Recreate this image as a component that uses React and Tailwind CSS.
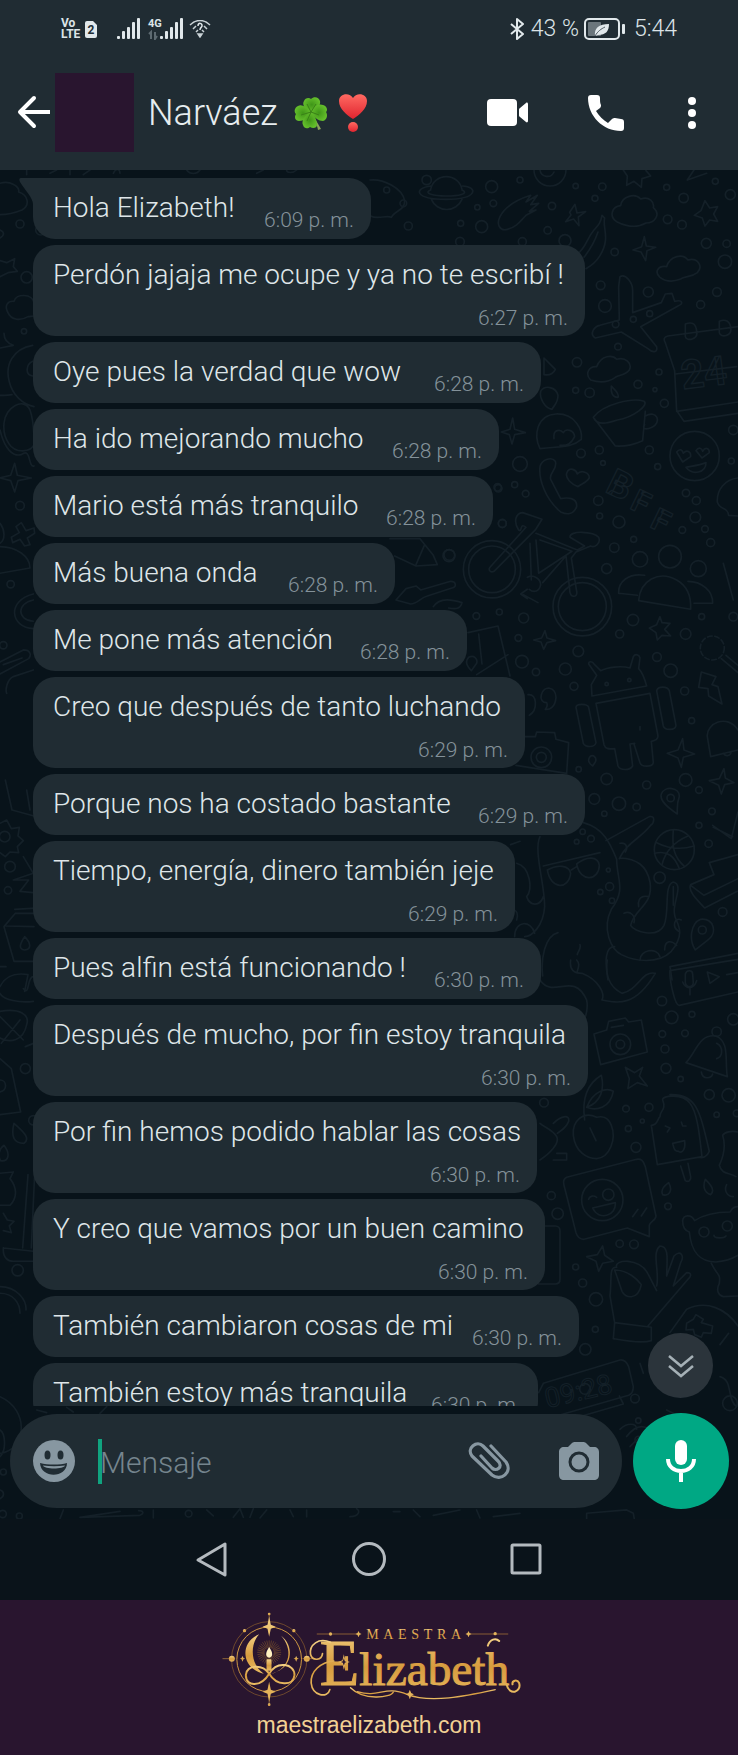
import React from "react"

const messages = [
  { text: "Hola Elizabeth!", time: "6:09 p. m.", width: "w-[338px]", first: true },
  { text: "Perdón jajaja me ocupe y ya no te escribí !", time: "6:27 p. m.", width: "w-[552px]", stacked: true },
  { text: "Oye pues la verdad que wow", time: "6:28 p. m.", width: "w-[508px]" },
  { text: "Ha ido mejorando mucho", time: "6:28 p. m.", width: "w-[466px]" },
  { text: "Mario está más tranquilo", time: "6:28 p. m.", width: "w-[460px]" },
  { text: "Más buena onda", time: "6:28 p. m.", width: "w-[362px]" },
  { text: "Me pone más atención", time: "6:28 p. m.", width: "w-[434px]" },
  { text: "Creo que después de tanto luchando", time: "6:29 p. m.", width: "w-[492px]", stacked: true },
  { text: "Porque nos ha costado bastante", time: "6:29 p. m.", width: "w-[552px]" },
  { text: "Tiempo, energía, dinero también jeje", time: "6:29 p. m.", width: "w-[482px]", stacked: true },
  { text: "Pues alfin está funcionando !", time: "6:30 p. m.", width: "w-[508px]" },
  { text: "Después de mucho, por fin estoy tranquila", time: "6:30 p. m.", width: "w-[555px]", stacked: true },
  { text: "Por fin hemos podido hablar las cosas", time: "6:30 p. m.", width: "w-[504px]", stacked: true },
  { text: "Y creo que vamos por un buen camino", time: "6:30 p. m.", width: "w-[512px]", stacked: true },
  { text: "También cambiaron cosas de mi", time: "6:30 p. m.", width: "w-[546px]" },
  { text: "También estoy más tranquila", time: "6:30 p. m.", width: "w-[505px]" },
]

// [cx, cy, r] dots scattered between the doodles, one list per wallpaper tile
const dotsTop = [
  [155, 50, 18], [240, 30, 9], [407, 48, 8], [487, 50, 11], [465, 85, 9], [112, 112, 8], [160, 100, 10], [336, 108, 11],
  [125, 170, 18], [62, 160, 9], [323, 181, 11], [731, 84, 14], [683, 148, 13], [726, 164, 13], [799, 220, 15], [860, 221, 11],
  [871, 74, 15], [826, 34, 9], [680, 52, 9], [524, 246, 11], [855, 275, 20], [482, 346, 13], [625, 366, 15], [831, 366, 13],
  [782, 404, 12], [495, 408, 19], [534, 530, 10], [629, 431, 9], [580, 448, 9], [527, 463, 10], [411, 577, 14], [407, 661, 9],
  [449, 668, 14], [657, 606, 9], [594, 643, 12], [645, 659, 6], [673, 700, 12], [423, 850, 13], [478, 840, 12], [628, 840, 12],
  [489, 879, 7], [653, 890, 9], [240, 882, 22], [173, 952, 11], [224, 944, 9], [257, 971, 10], [475, 992, 14], [479, 1038, 9],
  [537, 1056, 18], [738, 969, 11], [769, 992, 12], [766, 1042, 16], [727, 1080, 10], [795, 1077, 10], [812, 1118, 12],
  [581, 1108, 9], [523, 1133, 14], [187, 1060, 12], [28, 1155, 16], [880, 780, 14], [874, 873, 9], [375, 212, 18], [247, 215, 12],
  [60, 215, 13], [-110, 100, 10], [-95, 168, 12], [-40, 30, 14], [-160, 60, 9],
]
const dotsMiddle = [
  [500, 26, 15], [775, 26, 24], [109, 168, 10], [178, 156, 9], [251, 174, 15], [579, 180, 17], [539, 222, 12], [737, 222, 16],
  [785, 170, 9], [880, 170, 13], [235, 234, 10], [415, 274, 16], [246, 305, 19], [376, 327, 18], [288, 336, 11], [402, 379, 12],
  [651, 291, 13], [692, 332, 20], [734, 393, 12], [755, 482, 9], [416, 628, 8], [500, 657, 17], [620, 675, 12], [737, 660, 19],
  [777, 690, 10], [463, 717, 16], [537, 731, 20], [590, 741, 11], [493, 761, 8], [816, 754, 10], [777, 796, 9], [806, 851, 11],
  [659, 953, 17], [848, 1056, 13], [428, 815, 8], [453, 836, 10], [410, 845, 7], [505, 930, 6], [509, 980, 12], [481, 996, 8],
  [516, 1022, 8], [500, 372, 5], [568, 360, 5],
]
const dotsBottom = [
  [666, 123, 14], [695, 172, 19], [756, 163, 9], [667, 222, 10], [735, 220, 10], [675, 267, 12], [678, 325, 15], [722, 357, 8],
  [808, 404, 15], [866, 406, 20], [830, 464, 8], [890, 460, 10], [558, 446, 10], [627, 442, 12], [607, 483, 6], [565, 506, 9],
  [588, 562, 15], [684, 739, 10], [334, 707, 12], [353, 761, 17], [539, 851, 11], [582, 853, 13], [407, 921, 9], [428, 969, 12],
  [468, 1018, 20], [466, 1108, 9], [436, 1168, 17], [312, 428, 13], [880, 178, 17], [435, 1287, 16], [585, 1316, 13],
  [595, 1382, 8], [595, 1439, 10], [645, 1434, 11], [640, 1483, 9], [870, 1330, 22], [855, 1498, 11], [560, 1740, 9],
]

function Dots({ items }) {
  return items.map(([cx, cy, r]) => <circle key={`${cx}-${cy}`} cx={cx} cy={cy} r={r} />)
}

function Wallpaper() {
  return (
    <svg
      aria-hidden="true"
      viewBox="0 170 738 1349"
      preserveAspectRatio="xMidYMin slice"
      className="absolute inset-0 w-full h-full"
      fill="none"
      stroke="#142028"
      strokeWidth="5"
      strokeLinecap="round"
      strokeLinejoin="round"
      fontFamily="Roboto, sans-serif"
    >
      <g transform="translate(440 170) scale(.3333)">
        <Dots items={dotsTop} />
        {/* planet and moon */}
        <path d="M-28 58a48 48 0 0 1 94 0M-26 88a50 50 0 0 0 92 0M-28 48c-50 6-52 40 46 40s96-38 50-40M-28 60c-24 10 10 18 46 18s72-6 48-18" />
        <path d="M282 0a48 48 0 1 0 96 0M300 0a22 22 0 0 0 42 6M550 0l12 18-2 28 22-12 22 18 2-26 26-8-14-16M742 30l20-30M742 30l58-20" />
        {/* pizza, hand */}
        <path d="M-210 30c40-4 96 24 104 62 2 28-30 30-40 50-16-8-40 8-62-4" />
        <path d="M180 140c-12 24 0 44 22 38 30-8 38-24 56-42l30-16-20 4 28-24-24 4 20-28-34 20 14-20c-50 16-78 36-92 64Z" />
        {/* clouds and stars */}
        <path d="M530 155c-24-16-14-46 12-48 4-30 44-38 60-20 26-10 42 10 38 26 24 20 4 46-22 46-28 16-60 10-88-4ZM660 322c-18-16-6-36 20-32 10-34 50-40 64-20 30-8 46 20 28 38-20 16-36 8-52 20-22 8-44 6-60-6ZM452 630c-18-18-6-42 18-40 14-36 48-36 60-22 26-8 48 12 38 32-12 16-28 14-42 22-22 16-50 16-74 8Z" />
        <path d="m405 103 6 26 26-4-22 16 2 26-16-20-24 8 16-20-4-8ZM795 92l14 22 24-4-12 22 12 22-24-4-14 18-8-24-24-8 20-14ZM613 200l6 28 28 4-26 10-4 30-14-26-24-6 26-10ZM218 744l6 34 32 10-32 6-8 28-8-28-24-8 26-8Z" />
        {/* banana */}
        <path d="M486 136c-4 24-12 30-24 44-24 28-22 50-48 70M486 136l8 8c-8 30 20 60-16 116-10 16-22 26-40 36M474 186c-10 30-22 50-42 76" />
        {/* plane */}
        <path d="M540 320c18-10 38 20 38 40v68l86-30 12-26 20-2 8 24c26-6 26 8 10 14l-112 62 48 60c4 20-14 18-26 6l-80-50-78 18c-20-12-2-36 14-38l58-16-2-100Z" />
        {/* calendar */}
        <path d="m894 470-210 28c-12 2-14 10-8 20l28 84 6 120 22 32 162-24M706 612l184-22M710 724l184-28M736 462c22-8 32 0 34 22 6 24-30 32-34 16ZM838 454c18-8 32 0 34 18 6 26-30 34-34 16Z" />
        <text x="728" y="658" fontSize="120" fontWeight="700" strokeWidth="4" transform="rotate(-7 728 658)">24</text>
        {/* drops, cup, bread */}
        <path d="M312 564l34 34c-8 18-22 18-34 16ZM302 664c12-20 46-14 52 12 0 24-12 30-18 42-22-4-38-34-34-54ZM514 648c6 8 26 22 20 34-18 0-22-16-20-34ZM460 742c30-40 120-60 152-48 16 10-30 48-80 56-30 10-60 18-72-8ZM460 742l66 86c30 2 60-6 82-16l8-88M616 738c36-20 50 20 20 34-22 10-30 2-22-8M300 836c-20-40-10-100 48-104 60-2 80 50 76 76-32 28-64 20-124 28ZM342 806c-4-30 20-28 28-18 8-14 32-8 34 12-10 20-20 28-44 26" />
        <circle cx="764" cy="858" r="74" />
        <path d="M710 846c10-12 18-6 20 4 10-12 24-6 22 10l-24 16ZM768 842c8-12 18-8 20 2 8-14 20-10 20 4l-22 16ZM738 892c20-4 40-6 60-14 0 30-40 40-60 14Z" />
        {/* phone, heart, initials */}
        <path d="M300 890c6-24 36-30 46-16 8 24-20 34-14 54l30 58c20-4 50-4 48 24-10 26-30 24-48 16-48-40-66-100-62-136ZM380 910c8-24 30-8 32 2 12-14 36-4 36 12-8 14-26 18-34 26-20-8-38-24-34-40Z" />
        <text x="492" y="964" fontSize="112" fontWeight="700" strokeWidth="4" transform="rotate(26 492 964)">B</text>
        <text x="566" y="1014" fontSize="92" fontWeight="700" strokeWidth="4" transform="rotate(26 566 1014)">F</text>
        <text x="626" y="1070" fontSize="92" fontWeight="700" strokeWidth="4" transform="rotate(26 626 1070)">F</text>
        <path d="M894 924c-40 4-64 36-62 72 10 28 30 12 34 40l28 2" />
        {/* bicycle */}
        <circle cx="156" cy="1198" r="86" />
        <circle cx="156" cy="1198" r="70" />
        <circle cx="427" cy="1310" r="88" />
        <circle cx="427" cy="1310" r="72" />
        <path d="m150 1192 108-120c-20-16-10 16-22 8-16-24-10-50 12-52l58 20-20 32-124 124c-10 6-18-4-12-12ZM288 1090l124 50 22-12-44-26c-2-22 70-18 86 0 8 20-14 32-24 26l-44 18-14 18 16 100c4 18-16 20-20 4l-12-110-70 80M270 1120l4 110M288 1110l8 100 100-66-96-34" />
        <path d="M262 1222c20-10 40 6 40 22-4 20-20 26-34 14M250 1274l44 24M262 1258l-20 14 20 14" />
        <circle cx="600" cy="1168" r="23" />
        <circle cx="690" cy="1160" r="34" />
        <path d="M536 1270c-2-34 30-62 78-54M536 1270l56 6M596 1292c4-60 60-92 114-62 32 18 44 52 42 88ZM744 1234c40 0 76 28 74 66h-56M850 1180l30 110" />
      </g>
      <g transform="translate(440 560) scale(.3333)">
        <Dots items={dotsMiddle} />
        <path d="m660 170 6 18 24 2-16 18 18 20-26-2-14 14-4-22-20-14 22-10ZM315 212l6 22 26 8-26 6-10 20-8-22-22-6 24-6Z" />
        {/* map */}
        <path d="m84 218 90-20 36 150M110 344l94-60M116 222l10 90M94 332c-12-12-20-28-8-40 16-8 28 4 24 18Z" />
        {/* robot */}
        <path d="m456 408-2-34 16-28-24-34c0-10 12-8 16 0l20 20c20-10 60-16 88-8l10-34c6-10 18-6 20 4l-4 32c12 12 18 30 24 52ZM468 430l162-30 24 128c0 10-8 14-20 16l6 64c-2 14-36 14-40 0l-18-56 2-2-14 2 8 66c-8 14-38 14-44 0l-10-52c-20 2-28 0-32-12ZM408 442c0-12 34-12 38 0l22 106c-4 16-32 14-38 2ZM650 392c4-14 32-14 38 0l20 104c-2 16-34 16-38 2Z" />
        {/* guitar, bolt, bell */}
        <circle cx="817" cy="264" r="36" strokeDasharray="14 8" />
        <path d="m844 296 50 42M858 286l36 30M784 336l-8 46 28 4 2 22 40 24-12-52-18-6 12-24ZM802 530c-4-40 60-70 92-20M802 530l10 60 82-20M850 580c8 12 22 8 24-6" />
        <path d="m728 536 4 34 32 12-34 10-6 30-10-28-32-14 32-10ZM852 626l4 28 26 14-28 6-10 28-8-26-28-14 30-6Z" />
        {/* camera and quotes */}
        <path d="M228 616 380 640l6-92-38-10-4-20-54-2-4 14h-40" />
        <circle cx="304" cy="592" r="31" />
        <circle cx="304" cy="592" r="15" />
        <path d="M304 404c8-28 42-26 44 8-2 30-20 38-32 36 8-10 6-16 4-20-12 0-20-10-16-24ZM264 404c28-4 30 46 4 62" />
        <path d="M712 762c-30-20-54-40-48-60 10-26 56-20 54 8-8 20-6 30-6 52ZM450 590c10-8 22 4 16 16l-8 12c-12-8-16-18-8-28Z" />
        <circle cx="692" cy="714" r="11" />
        {/* octopus wearing glasses */}
        <path d="M430 788c60 16 80 60 100 110 0 60 30 90-16 150-30 60 0 120 30 136 40 20 110 30 150-10 50-60 10-90 10-110-10-30 30-90-4-98-30 10-10 90-28 130-20 40-90 20-100 0 10-50 70-60 58-130-10-50-40-70-90-72M498 842l130-72c20-4 14 20 4 26-30 40-70 50-94 100M300 830c-20 40 14 140 14 210-4 60-40 90-60 90M230 910c40 10 50 80 30 100 10 30 40 30 50 0M220 1050c10 0 16 14 10 30M224 1130c0-50 50-50 60-10" />
        <path d="m310 918 170-40M322 930c30-18 66-14 70 10-6 50-60 50-70-10ZM410 912c30-24 64-24 68 4 0 44-56 56-68-4ZM394 930l16-10M540 850c20-4 24 14 16 26M596 1040c-6-40 30-30 30-30M552 1060c20-10 36 10 30 28M700 980v56M724 1080c-20-10-30 20-8 34M674 1170c0-30 20-30 36-14M600 1200c0-30 50-40 60-10" />
        {/* basketball, sneaker */}
        <circle cx="703" cy="869" r="60" />
        <path d="M650 848c40 20 80 20 112 10M700 810c-4 50 0 80 34 110M666 914c10-40 40-70 78-86M644 880c40-10 60 10 74 46" />
        <path d="m818 796 56 40 20-80M820 802l58 28M808 908l86-24M808 908l14 36-70 30c-10 20 24 50 42 70l98-50M752 976l40 30 102-50M766 1170c-20-30-14-80 16-92 40-4 50 40 24 60Z" />
        <circle cx="787" cy="1110" r="12" />
        <path d="M600 500v10M354 1118c-40 10-52 80-46 130M420 1154c4 16-8 20-8 30M504 1260c-10-60-8-100 20-100M690 1220l204-40M690 1220l6 40M240 844l-28 10" />
      </g>
      <g transform="translate(440 960) scale(.3333)">
        <Dots items={dotsBottom} />
        <path d="M392 0c-4 30 10 40 34 40 50 20 70 60 60 80 50 10 100 20 160-80-40-10-50 50-100 60-40-20-50-60-44-100M300 60c40 60 100-30 140 60 4 20 0 50-10 60M410 0c10 10 6 20 2 34" />
        <path d="M894 96 718 136c-14 2-30-80-28-104l204-34M736 42c4-14 22-12 22 0l2 26c-2 16-20 16-24 0ZM728 66c10 24 34 22 42-4M750 86v18M802 36l36 14-28 20ZM860 44l34-6" />
        {/* camera, bell */}
        <path d="m462 222 38-12 6-26 50-10 10 12 38-6 18 96-140 38ZM514 202l36-6" />
        <circle cx="541" cy="253" r="31" />
        <circle cx="541" cy="253" r="13" />
        <circle cx="830" cy="215" r="14" />
        <path d="m738 308 124 42c-8-50 8-104-34-122-50-8-60 50-90 80ZM784 336c4 24 30 20 34 6M830 250c20 10 20 40 0 46" />
        <path d="m556 322 28 16 24-16-10 26 24 30-30-10-28 18 4-30Z" />
        {/* cherry */}
        <path d="M470 472c-40-20-74 10-70 54 6 50 40 70 70 70 40-4 60-60 44-100-10-26-30-28-44-24ZM434 480c-10-70 10-110 50-134 10 40 0 80-44 96M440 442c20-50 60-60 80-48-10 50-50 60-80 48M450 504l18 38" />
        {/* ice lolly */}
        <path d="m652 614-18-118c20 0 18-20 26-26 0-20 20-20 8-50-4-14 60-20 82 10 24 30 30 110 36 160ZM690 404c80-4 90 50 118 170-6 16-20 22-32 18M722 618l14 44c10 6 18-2 16-12l-8-40M676 498l14 6-8 12M724 486l4 12 10 0M698 550l36-8c4 30-10 38-18 32-14 0-14-10-18-24" />
        <path d="M686 668c-14 10-24 24-18 36 18 6 32-10 18-36ZM796 658c-8 20-4 40 16 46 16-14-4-34-16-46ZM860 674c-10 20 4 36 20 36M894 516c-20-4-40 0-46 10 10 30 4 60-10 90 8 30 30 20 50 34" />
        {/* speech bubble */}
        <path d="m380 652 210-54c14-2 20 4 26 22l32 148c0 12-16 16-20 28v34l-66-26-130 34c-14 0-20-6-24-20l-36-142c-4-14 0-20 8-24Z" />
        <circle cx="487" cy="720" r="62" />
        <circle cx="505" cy="704" r="17" />
        <path d="M446 718c4-12 16-12 24-6M458 744l68-16c4 40-50 56-68 16ZM578 770l16-22M604 768l16-24M300 600c30-20 60-50 50-70-10-20-40-30-50-40M340 490c20-20 50-30 46-6-8 20-20 26-34 36M350 580h30v20h-40M316 798h30c10 0 14 8 14 14v146c0 10-6 14-14 14h-50" />
        {/* bear */}
        <path d="M894 740c-20 0-20 14-24 16-40 0-76 6-106 26-10-20-34-18-36 0 0 20 8 30 20 34 6 60 30 90 80 90 30-2 50-10 66-20M814 910c20 40 28 30 24 60-10 20-4 36 12 40l44-2" />
        <circle cx="792" cy="816" r="15" />
        <circle cx="862" cy="798" r="15" />
        <path d="M822 826c0 10 30 10 36 2" />
        {/* ok hand */}
        <path d="m524 1088-14-80c6-50-4-90 20-86-10-24 70-30 94 20l26 50M524 930c40 0 70 30 80 44-10 50-50 40-58 20ZM650 978c10-40-16-100 10-120 30 0 20 50 20 90l22-60c20-20 32 0 20 20l-22 70 40-40c20 0 10 16 4 20l-120 140M524 1088l110 14v40c-30 10-80 0-114-6Z" />
        <path d="m488 858 6 28 26 18-32 6-12 24-8-30-28-14 32-6Z" />
        {/* game pad */}
        <path d="m690 1118 50-70c60-30 120 0 154 50M740 1090l20-12 8-14 22 14-6 10 34 10-4 22-24-2-6 14-20-8-4-16-22 2ZM866 1120l-26 34" />
        {/* digital clock */}
        <path d="m310 1270 230-70c14-2 20 6 26 20l14 60c0 14-4 22-14 26l-230 66M296 1298l14-28M330 1396l220-64-12-24" />
        <text x="322" y="1344" fontSize="82" strokeWidth="3" transform="rotate(-13 322 1344)">09:28</text>
        <path d="M840 1250c40 10 20 70 50 90M540 1408c20-20 50-20 50 0M630 1400l-60 60M680 1350l60 30M600 1210l10 30" />
        <path d="M440 1720v-60l120-10 20 10 12 70M480 1740a30 30 0 1 1 36-2M650 1680l20 50c10 10 14-10 20-30M760 1720l20-30M560 1430c30-40 60-40 90 0" />
      </g>
      {/* left edge */}
      <g transform="translate(0 170) scale(.3333)">
        <path d="M0 40c30-10 60 10 56 26 30 10 34 40 10 54-20 8-50 14-66 14M0 180c14 6 14 16 0 24M0 272l20 6 24-12-4 24 12 14-28 4-24 12M22 424c-8-16 0-32 20-30 6-24 54-24 60 4 20-2 34 16 26 28-14 14-30 12-44 14-20 12-50 14-62-16ZM12 490c0 20 10 30 28 36l-40 8M98 526c-60 10-84 60-70 110 10 40 40 66 74 74M98 574c-20 10-24 40 0 44M0 676c10 0 16 2 36-2M12 760c4-50 60-80 78-40 14 40 10 80 14 100-10 30-60 30-78 0-14-20-16-40-14-60ZM0 780c14 60 40 80 64 74 30-24 20 40 38 34M44 880l8 36 42 8-40 8-10 34-12-34-32-8 32-8ZM64 1058l14 24 24-8 2 16-22 14 8 20-16 4-14-20-22 10-4-16 24-14-10-18ZM0 1060c16 20 16 50 0 60M0 1130c50 0 90 30 90 64L0 1210M100 1272c-80 20-70 100 0 104M100 1290c-50 10-50 60 0 64M0 1476l70-36c20 0 26 14 16 26l-86 46M10 1484l56-20 M100 1500l-60 20c-20 10-24 40-20 50" />
        <circle cx="60" cy="162" r="12" />
        <circle cx="122" cy="180" r="15" />
        <circle cx="80" cy="322" r="17" />
        <circle cx="72" cy="484" r="8" />
        <circle cx="60" cy="1007" r="13" />
        <circle cx="32" cy="1243" r="11" />
        <circle cx="10" cy="1426" r="11" />
        <path d="M80 14V0M150 10l20-10M210 0v14M250 14l20-14M340 10c10-20 20-10 20 0M560 0c10 14 30 14 40 0M770 10l20-10M860 0c0 10 20 10 30 0" />
      </g>
      <g transform="translate(0 780) scale(.3333)">
        <path d="M16 0l20 90 66 18M80 30l10 60M0 130l20-10 14 26 24-4-4 26 16 14-18 18 4 18-26-2-14 14-16-12M70 230l30 50-60 20h46l-26 34 40 4M44 388l100-6M46 400 12 440l30 104h100M46 400h60M18 438l84 2M74 470c-14 20-20 38 0 40 22-2 18-22 0-40ZM0 560h18M0 620c20-40 60-40 84-36l-10 50M100 590c-20 0-10 60-30 36M0 640c10 20 60 30 100 24M0 694c60-10 90 10 80 40-10 50-50 56-80 40M0 710l70 70M60 720l-56 70M76 800l60-24M0 836l34 30 28 130-62 8M0 900c20 0 24 30 0 36M42 1030c-10 40 0 60 30 60 20-14 0-34-30-60ZM12 1096c-14 10-20 30-10 46 24 4 30-20 10-46ZM0 1180l40-4-10 20c24 30 20 60 0 80H0M10 1300l12 20 20 4-14 14 6 20-24-6M84 1184l-16 220M104 1180l-10 224M10 1404l90 10 120 8M10 1404c-2 30 14 40 30 40h66M0 1520c50 0 80 40 78 70M0 1540c40 0 60 30 60 60" />
        <circle cx="14" cy="170" r="16" />
        <circle cx="30" cy="260" r="16" />
        <circle cx="24" cy="331" r="11" />
        <circle cx="76" cy="866" r="15" />
        <circle cx="100" cy="1021" r="14" />
        <circle cx="53" cy="1471" r="17" />
      </g>
      {/* strip under the composer */}
      <g transform="translate(0 1330) scale(.3333)">
        <path d="M110 240l30 8M200 232l20 14M300 250l20-20M0 300c16 10 20 60 0 80M0 370c80-10 90-130 0-170M0 480c14 4 14 20 0 26M190 540l-10 26M240 562l180-6c14-6 10-14-4-14M240 562l120-18M460 540v24M620 540l20 18M700 562l20-26 10 26M750 562l10-26M800 540l-20 24M870 540l10 20M920 540v20M1050 560c30 0 30-20 20-24M1180 545h20M1240 540l20 20M1300 556l80-16M1430 540l10 24M1480 560l80-10" />
        <circle cx="8" cy="552" r="11" />
        <circle cx="58" cy="558" r="9" />
        <circle cx="566" cy="551" r="10" />
        <circle cx="10" cy="426" r="9" />
      </g>
      {/* pencil and brush behind the middle bubbles */}
      <g transform="translate(370 470) scale(.3333)">
        <path d="m60 206 90 0 40 50 12 28-64 4-64-30M164 224l-26 60M78 390l30-34 30-8 14 12 90-26c18 0 18 18 4 20l-74 24c-20 4-30 24-50 24ZM190 410c20-30 60-20 86-12-4 20-20 20-40 16" />
        <circle cx="237" cy="257" r="18" />
        <circle cx="397" cy="161" r="12" />
        <circle cx="385" cy="55" r="11" />
      </g>
    </svg>
  )
}

function SignalBars() {
  return (
    <svg viewBox="0 0 23 22" className="w-[23px] h-[22px]" fill="#e1e8eb" aria-hidden="true">
      <rect x="0" y="18" width="3" height="3" rx="1" />
      <rect x="5" y="13" width="3" height="8" rx="1" />
      <rect x="10" y="9" width="3" height="12" rx="1" />
      <rect x="15" y="4" width="3" height="17" rx="1" />
      <rect x="20" y="0" width="3" height="21" rx="1" />
    </svg>
  )
}

function StatusBar() {
  return (
    <div className="flex items-center justify-between h-14 pt-[2px] px-[61px] text-[#dce4e8]">
      <div className="flex items-center">
        <div className="w-5 text-xs leading-[11px] font-bold">
          <div>Vo</div>
          <div>LTE</div>
        </div>
        <svg viewBox="0 0 12 17" className="ml-1 w-3 h-[17px]" aria-hidden="true">
          <path d="M2 0h6l4 4v11a2 2 0 0 1-2 2H2a2 2 0 0 1-2-2V2a2 2 0 0 1 2-2Z" fill="#e1e8eb" />
          <text x="6" y="13" fontSize="12" fontWeight="700" textAnchor="middle" fill="#202c33">2</text>
        </svg>
        <div className="ml-5">
          <SignalBars />
        </div>
        <div className="flex ml-2 items-end">
          <div className="w-3 text-[11px] leading-3 font-bold">
            <div>4G</div>
            <svg viewBox="0 0 12 10" className="w-3 h-[10px]" stroke="#5d6a71" strokeWidth="2" fill="none" aria-hidden="true">
              <path d="M1 4l2-2v7M7 2v7l2-3" />
            </svg>
          </div>
          <SignalBars />
        </div>
        <svg viewBox="0 0 22 18" className="ml-[6px] w-[22px] h-[18px]" fill="none" stroke="#c9d2d6" strokeWidth="1.5" aria-hidden="true">
          <path d="M1 5C7-1 15-1 21 5M4 9l3-3M18 9l-3-3M7 12l2-2M15 12l-2-2" />
          <path d="M9 6c0-4 4.500-3 4 0-.3 1.500-2 1.500-2 4" stroke="#e1e8eb" />
          <path d="M9 14h4l-2 3Z" fill="#e1e8eb" />
        </svg>
      </div>
      <div className="flex items-center text-[23px] leading-7 font-light">
        <svg viewBox="0 0 14 22" className="w-[14px] h-[22px]" fill="none" stroke="#e1e8eb" strokeWidth="2" strokeLinejoin="round" aria-hidden="true">
          <path d="m1 6 12 10-6 5V1l6 5L1 16" />
        </svg>
        <span className="ml-[7px]">43 %</span>
        <svg viewBox="0 0 42 22" className="ml-[5px] w-[42px] h-[22px]" aria-hidden="true">
          <rect x="1" y="1" width="34" height="20" rx="4" fill="none" stroke="#e1e8eb" strokeWidth="2" />
          <rect x="4" y="4" width="13" height="14" rx="1" fill="#6b767c" />
          <path d="M11 18c-1-8 4-12 14-12 0 7-3 11-11 11" fill="#e1e8eb" />
          <path d="M11 18c3-5 6-7 10-9" stroke="#4a565d" fill="none" />
          <rect x="38" y="6" width="3" height="10" rx="1" fill="#e1e8eb" />
        </svg>
        <span className="ml-2">5:44</span>
      </div>
    </div>
  )
}

function Clover() {
  return (
    <svg viewBox="0 0 34 36" className="w-[34px] h-9" role="img" aria-label="trébol">
      <defs>
        <radialGradient id="leaf">
          <stop offset="0" stopColor="#3f9618" />
          <stop offset="1" stopColor="#63bd2b" />
        </radialGradient>
      </defs>
      <path d="M17 17c3 6 7 11 10 17l-3 1c-1-7-5-12-8-17Z" fill="#8aa35a" />
      <g fill="url(#leaf)">
        <path d="M17 17C10 14 8 9 10 6c1-3 5-4 7-2 3-3 8-2 9 2 1 4-3 9-9 11Z" />
        <path d="M17 17c3-6 8-9 12-7 4 1 5 5 3 7 2 3 1 8-3 9-4 0-9-3-12-9Z" />
        <path d="M17 17c-5-6-10-8-13-6-4 2-4 6-2 8-2 3-1 7 3 7 5 0 9-3 12-9Z" />
        <path d="M17 17c-6 4-10 9-8 13 1 4 5 4 7 2 3 2 7 1 7-2 0-5-2-9-6-13Z" />
      </g>
      <path d="M17 17 13 9M17 17l5-8M17 17l8 3M17 17l-4 9M17 17l-10 3" stroke="#3a8217" strokeWidth="1" />
    </svg>
  )
}

function HeartMark() {
  return (
    <svg viewBox="0 0 30 40" className="w-[30px] h-10" role="img" aria-label="corazón">
      <defs>
        <linearGradient id="heart" x1="0" y1="0" x2="0" y2="1">
          <stop offset="0" stopColor="#ff6a62" />
          <stop offset="1" stopColor="#e0242f" />
        </linearGradient>
      </defs>
      <path d="M15 26C9 22 1 16 1 8 1 0 12-1 15 5 18-1 29 0 29 8c0 8-8 14-14 18Z" fill="url(#heart)" />
      <circle cx="15" cy="34" r="5" fill="url(#heart)" />
    </svg>
  )
}

function ChatHeader() {
  return (
    <div className="flex items-center h-[114px] pl-4 pb-[2px] pr-8">
      <button type="button" aria-label="Atrás">
        <svg viewBox="0 0 35 34" className="w-[35px] h-[34px]" fill="none" stroke="#fff" strokeWidth="4" strokeLinecap="round" strokeLinejoin="round">
          <path d="M18 3 4 17l14 14" />
          <path d="M4 17h30" strokeLinecap="butt" />
        </svg>
      </button>
      <div className="ml-1 w-[79px] h-[79px] bg-[#29152f]" />
      <h1 className="flex items-center ml-[14px] pt-[2px] text-4xl leading-[48px] font-light text-[#e6ecef]">
        Narváez
        <span className="ml-4">
          <Clover />
        </span>
        <span className="ml-[10px]">
          <HeartMark />
        </span>
      </h1>
      <div className="flex items-center ml-auto pt-[2px] text-white">
        <button type="button" aria-label="Videollamada">
          <svg viewBox="0 0 42 28" className="w-[42px] h-7" fill="currentColor">
            <rect x="0" y="0" width="30" height="27" rx="4" />
            <path d="M32 11c0-1 0-1 1-2l6-5c1-1 2 0 2 1v17c0 1-1 2-2 1l-6-5c-1-1-1-1-1-2Z" />
          </svg>
        </button>
        <button type="button" aria-label="Llamar" className="ml-[59px]">
          <svg viewBox="0 0 36 36" className="w-9 h-9" fill="currentColor">
            <path d="M3 0h6c2 0 3 1 3 3 0 3 0 5 1 7 0 1 0 2-1 3l-4 3c3 5 7 9 12 12l4-4c1-1 2-1 3-1l6 1c2 0 3 1 3 3v6c0 2-1 3-3 3C15 36 0 21 0 3c0-2 1-3 3-3Z" />
          </svg>
        </button>
        <button type="button" aria-label="Más opciones" className="ml-[54px]">
          <svg viewBox="0 0 28 34" className="w-7 h-[34px]" fill="currentColor">
            <circle cx="14" cy="5" r="4" />
            <circle cx="14" cy="17" r="4" />
            <circle cx="14" cy="29" r="4" />
          </svg>
        </button>
      </div>
    </div>
  )
}

function Message({ message }) {
  const layout = message.stacked
    ? "flex-col min-h-[91px] pb-[6px]"
    : "items-end min-h-[61px] pb-[7px]"

  return (
    <li className={`relative flex justify-between shrink-0 max-w-full pl-5 pr-[17px] pt-[10px] rounded-[22px] bg-[#202c33] ${layout} ${message.width}`}>
      {message.first && (
        <svg viewBox="0 0 40 26" className="absolute top-0 -left-[14px] w-10 h-[26px]" fill="#202c33" aria-hidden="true">
          <path d="M2 0h38v26H14C14 20 6 12 1 4 0 2 0 0 2 0Z" />
        </svg>
      )}
      <p className="relative self-start h-10 text-[28px] leading-10 font-light text-[#dfe6e9] whitespace-nowrap">{message.text}</p>
      <time className="self-end text-[21px] leading-6 font-light text-[#84929a] whitespace-nowrap">{message.time}</time>
    </li>
  )
}

function Composer() {
  return (
    <div className="relative flex items-center gap-[11px] pt-[7px] pb-[10px] pl-[10px] pr-[9px]">
      <div className="flex flex-1 min-w-0 items-center h-[94px] px-[23px] rounded-full bg-[#202c33] text-[#8797a1]">
        <button type="button" aria-label="Emojis">
          <svg viewBox="0 0 42 42" className="w-[42px] h-[42px]">
            <circle cx="21" cy="21" r="21" fill="#8797a1" />
            <ellipse cx="14.500" cy="15" rx="3" ry="4.500" fill="#202c33" />
            <ellipse cx="27.500" cy="15" rx="3" ry="4.500" fill="#202c33" />
            <path d="M7 23c8 2 20 2 27 0 0 15-26 16-27 0Z" fill="#202c33" />
            <path d="M10 25.500c7 1 15 1 22 0-1 4-21 4-22 0Z" fill="#8797a1" />
          </svg>
        </button>
        <span className="ml-[23px] -mr-[2px] w-1 h-[45px] bg-[#10a37f]" />
        <input
          type="text"
          aria-label="Mensaje"
          placeholder="Mensaje"
          className="flex-1 min-w-0 h-12 pt-[2px] text-[30px] leading-10 font-light bg-transparent outline-none text-[#dfe6e9] placeholder:text-[#75858e]"
        />
        <button type="button" aria-label="Adjuntar">
          <svg viewBox="0 0 42 38" className="w-[42px] h-[38px]" fill="none" stroke="currentColor" strokeWidth="3.200" strokeLinecap="round" strokeLinejoin="round">
            <path d="m23 4 15 16c7 10-5 20-14 13L4 14C-2 6 9-2 15 4l15 15c6 6-2 11-6 7L13 14" />
          </svg>
        </button>
        <button type="button" aria-label="Cámara" className="ml-[49px]">
          <svg viewBox="0 0 40 38" className="w-10 h-[38px]">
            <path d="M5 5h4l4-4c1-1 2-1 3-1h8c1 0 2 0 3 1l4 4h4c3 0 5 2 5 5v23c0 3-2 5-5 5H5c-3 0-5-2-5-5V10c0-3 2-5 5-5Z" fill="#8797a1" />
            <circle cx="20" cy="20" r="9" fill="none" stroke="#202c33" strokeWidth="3" />
          </svg>
        </button>
      </div>
      <button type="button" aria-label="Grabar audio" className="flex shrink-0 items-center justify-center w-24 h-24 rounded-full bg-[#00a884]">
        <svg viewBox="0 0 30 42" className="w-[30px] h-[42px]" fill="none" stroke="#fff" strokeWidth="4">
          <rect x="9" y="0" width="12" height="25" rx="6" fill="#fff" stroke="none" />
          <path d="M2 19c0 16 26 16 26 0M15 31v11" />
        </svg>
      </button>
    </div>
  )
}

function NavigationBar() {
  return (
    <nav className="flex items-center justify-center gap-[117px] h-[81px] bg-[#0a131a]">
      <button type="button" aria-label="Volver">
        <svg viewBox="0 0 40 40" className="w-10 h-10" fill="none" stroke="#b4babf" strokeWidth="3" strokeLinejoin="round">
          <path d="M33 4v31L6 20Z" />
        </svg>
      </button>
      <button type="button" aria-label="Inicio">
        <svg viewBox="0 0 40 40" className="w-10 h-10" fill="none" stroke="#b4babf" strokeWidth="3">
          <circle cx="20" cy="19" r="15.500" />
        </svg>
      </button>
      <button type="button" aria-label="Recientes">
        <svg viewBox="0 0 40 40" className="w-10 h-10" fill="none" stroke="#b4babf" strokeWidth="3">
          <rect x="6" y="5" width="28" height="28" rx="1" />
        </svg>
      </button>
    </nav>
  )
}

const rays = Array.from({ length: 32 }, (_, i) => (i * Math.PI) / 16)

function Logo() {
  return (
    <svg viewBox="47 45 920 294" className="w-[307px] h-[98px]" role="img" aria-label="Maestra Elizabeth">
      <defs>
        <linearGradient id="gold" x1="0" y1="0" x2="0" y2="1">
          <stop offset="0" stopColor="#f3d083" />
          <stop offset=".55" stopColor="#d79c3e" />
          <stop offset="1" stopColor="#e9bb62" />
        </linearGradient>
      </defs>
      <g fill="none" stroke="#8f602c" strokeWidth="2">
        <circle cx="206" cy="193" r="113" />
        <circle cx="206" cy="193" r="97" stroke="#cf9843" strokeWidth="3" />
        {rays.map((angle) => (
          <line
            key={angle}
            x1={206 + Math.cos(angle) * 14}
            y1={172 + Math.sin(angle) * 14}
            x2={206 + Math.cos(angle) * 36}
            y2={172 + Math.sin(angle) * 36}
            strokeWidth="1.500"
          />
        ))}
        <path d="M66 191h38M306 191h36M206 55v60M206 270v60" stroke="#c08d40" />
      </g>
      <g fill="url(#gold)">
        <path d="m206 65 5 24 15 6-15 6-5 24-5-24-15-6 15-6ZM206 260l5 24 15 6-15 6-5 24-5-24-15-6 15-6Z" />
        <circle cx="94" cy="191" r="9" />
        <circle cx="319" cy="191" r="9" />
        <circle cx="206" cy="57" r="4" />
        <circle cx="206" cy="329" r="4" />
        <circle cx="132" cy="107" r="5" />
        <circle cx="280" cy="107" r="5" />
        <path d="m126 183 3 6 5 2-5 2-3 7-3-7-5-2 5-2ZM287 183l3 6 5 2-5 2-3 7-3-7-5-2 5-2Z" />
        <path d="M176 118c-60 24-54 104 14 118-36-22-46-82-14-118Z" />
        <path d="M242 122c38 28 36 90-14 108l-18 8c64-20 66-78 32-116Z" />
        <rect x="198" y="193" width="15" height="34" rx="2" />
        <path d="M206 156c12 18 12 30 0 32-12-2-12-14 0-32Z" fill="#fff1c0" />
      </g>
      <path
        d="M206 236c-20-28-66-28-70 4 0 38 46 36 70-4s76-30 76 4c-4 36-54 32-76-4Z"
        fill="none"
        stroke="url(#gold)"
        strokeWidth="6"
      />
      <g fontFamily="Liberation Serif, serif" fill="url(#gold)" stroke="url(#gold)">
        <text x="497" y="133" fontSize="42" strokeWidth="0" letterSpacing="14">MAESTRA</text>
        <text x="358" y="271" fontSize="142" strokeWidth="3">
          <tspan fontSize="194">E</tspan>lizabeth
        </text>
      </g>
      <g fill="none" stroke="url(#gold)" strokeWidth="5" strokeLinecap="round">
        <path d="M390 142c-36-16-64 8-60 36 6 22 34 18 36-2M400 198c-40 4-70 30-68 66 4 40 50 46 56 20" />
        <path d="M450 278c40 40 120 30 128 14M470 290c70 20 80-20 150 8s180 4 264-14" strokeWidth="4" />
        <path d="M918 268c8 36 46 24 38-4-6-12-22-8-20 4M862 152c6-20 24-24 34-14" strokeWidth="6" />
        <path d="M350 117h122M806 117h116" strokeWidth="2" stroke="#b98037" />
      </g>
      <g fill="#e4b45c">
        <circle cx="390" cy="117" r="5" />
        <circle cx="884" cy="116" r="5" />
        <path d="m474 108 3 6 6 3-6 3-3 7-3-7-6-3 6-3ZM804 108l3 6 6 3-6 3-3 7-3-7-6-3 6-3ZM628 284l4 10 8 4-8 4-4 11-4-11-8-4 8-4ZM430 178l4 18 14 5-14 5-4 18-4-18-14-5 14-5Z" />
      </g>
      <path d="m430 190 3 9 6 2-6 2-3 9-3-9-6-2 6-2Z" fill="#29152f" />
    </svg>
  )
}

function BrandFooter() {
  return (
    <footer className="flex flex-col items-center h-[155px] pt-[10px] bg-[#29152f]">
      <Logo />
      <a href="https://maestraelizabeth.com" className="font-['Liberation_Sans',sans-serif] text-[23px] leading-[34px] text-[#f2d194]">
        maestraelizabeth.com
      </a>
    </footer>
  )
}

export default function App() {
  return (
    <div className="flex flex-col h-screen overflow-hidden font-['Roboto',sans-serif] bg-[#08131a]">
      <header className="shrink-0 bg-[#202c33]">
        <StatusBar />
        <ChatHeader />
      </header>
      <main className="relative flex flex-col flex-1 min-h-0">
        <Wallpaper />
        <ul className="relative flex flex-col flex-1 min-h-0 items-start gap-[6px] overflow-hidden pt-2 pl-[33px] pr-6">
          {messages.map((message) => (
            <Message key={message.text} message={message} />
          ))}
        </ul>
        <button
          type="button"
          aria-label="Ir al final"
          className="absolute right-[25px] bottom-[121px] flex items-center justify-center w-[65px] h-[65px] rounded-full bg-[#2b343b]"
        >
          <svg viewBox="0 0 26 24" className="w-[26px] h-6" fill="none" stroke="#a5b0b6" strokeWidth="2.500">
            <path d="m1 2 12 10L25 2M1 12l12 10 12-10" />
          </svg>
        </button>
        <Composer />
      </main>
      <div className="shrink-0">
        <NavigationBar />
        <BrandFooter />
      </div>
    </div>
  )
}
